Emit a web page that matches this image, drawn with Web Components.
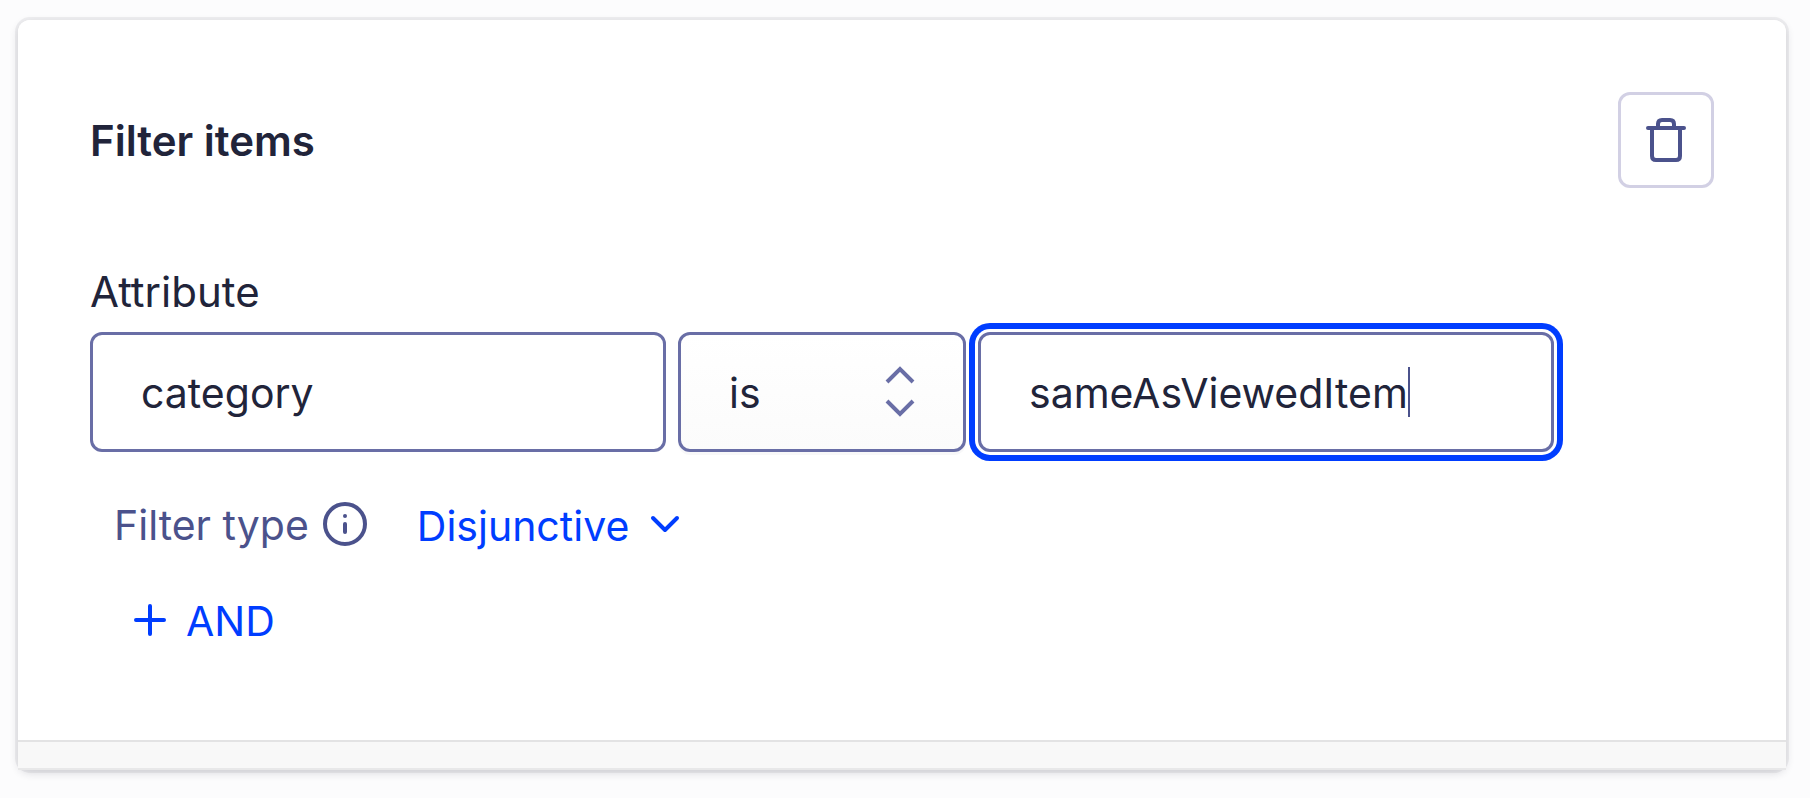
<!DOCTYPE html>
<html lang="en">
<head>
<meta charset="utf-8">
<title>Filter items</title>
<style>
  body {
    margin: 0;
    padding: 20px 24px 28px 18px;
    background: #fcfcfd;
    color: #21243a;
    font: 42px/60px Inter, "Liberation Sans", sans-serif;
    --accent: #003dff;
    --muted: #4b528c;
    --line: #696ea6;
    --control-size: 41px;
  }
</style>
</head>
<body>
<filter-card>
  <filter-header>Filter items</filter-header>
  <filter-row>
    <text-field label="Attribute" value="category"></text-field>
    <operator-select></operator-select>
    <text-field name="Value" value="sameAsViewedItem" active></text-field>
  </filter-row>
  <filter-type>Filter type</filter-type>
  <add-button>AND</add-button>
</filter-card>

<script>
  const base = `
    <style>
      * { box-sizing: border-box; }
      button, input, select { font: inherit; color: inherit; margin: 0; padding: 0; border: 0; background: none; outline: 0; appearance: none; }
      button, select { cursor: pointer; }
      svg { display: block; fill: none; stroke: currentColor; flex: none; }
    </style>`;

  const define = (name, html, setup) => customElements.define(name, class extends HTMLElement {
    constructor() {
      super();
      this.attachShadow({ mode: 'open' }).innerHTML = base + html;
    }
    connectedCallback() { if (setup) setup(this, this.shadowRoot); }
  });

  define('filter-card', `
    <style>
      :host { display: block; }
      section { border-radius: 12px; box-shadow: 0 0 0 3px rgba(35,38,59,.06), 0 3px 9px 0 rgba(35,38,59,.16); }
      .body { padding: 72px 72px 90px; background: #fff; border-radius: 12px 12px 0 0; }
      footer { height: 30px; background: #f8f8f8; border-top: 2px solid #e3e3e4; border-bottom: 2px solid #e8e8e9; }
    </style>
    <section><div class="body"><slot></slot></div><footer></footer></section>`);

  define('filter-header', `
    <style>
      :host { display: flex; justify-content: space-between; align-items: center; }
      h2 { margin: 0; padding-top: 2px; font-size: inherit; font-weight: 600; }
      button { display: grid; place-items: center; width: 96px; height: 96px; border: 3px solid #d2d0e4; border-radius: 12px; background: #fff; color: var(--muted); }
    </style>
    <h2><slot></slot></h2>
    <button type="button" aria-label="Delete filter">
      <svg width="48" height="48" viewBox="0 0 48 48" stroke-width="4" stroke-linecap="round" stroke-linejoin="round"><path d="M6 12H42M10 12V40Q10 44 14 44H34Q38 44 38 40V12M16 12V8Q16 4 20 4H28Q32 4 32 8V12"/></svg>
    </button>`);

  define('filter-row', `
    <style>:host { display: grid; grid-template-columns: 2fr 1fr 2fr; gap: 12px; align-items: end; margin: 74px 160px 0 0; }</style>
    <slot></slot>`);

  define('text-field', `
    <style>
      :host { display: block; min-width: 0; }
      label { display: block; margin-bottom: 10px; }
      label:empty { display: none; }
      .box { display: flex; align-items: center; height: 120px; padding: 0 48px; border: 3px solid var(--line); border-radius: 12px; background: #fff; font-size: var(--control-size); }
      input { flex: 1; min-width: 0; height: 60px; padding-top: 2px; }
      .caret { display: none; width: 2px; height: 50px; background: var(--muted); }
      :host([active]) .box { box-shadow: 0 0 0 3px #fff, 0 0 0 9px var(--accent); }
      :host([active]) input { flex: none; field-sizing: content; caret-color: transparent; }
      :host([active]) .caret { display: block; }
    </style>
    <label for="field"></label>
    <div class="box"><input id="field" type="text"><span class="caret"></span></div>`,
    (host, root) => {
      const input = root.querySelector('input');
      root.querySelector('label').textContent = host.getAttribute('label') || '';
      if (host.hasAttribute('name')) input.setAttribute('aria-label', host.getAttribute('name'));
      input.value = host.getAttribute('value');
    });

  define('operator-select', `
    <style>
      :host { display: grid; align-items: center; font-size: var(--control-size); }
      select, svg { grid-area: 1 / 1; }
      select { width: 100%; height: 120px; padding: 2px 48px 0; border: 3px solid var(--line); border-radius: 12px; background: linear-gradient(#fff, #fbfbfb); box-shadow: 0 3px 0 rgba(35,38,59,.03); }
      svg { justify-self: end; margin-right: 48px; color: var(--line); pointer-events: none; }
    </style>
    <select aria-label="Operator"><option>is</option><option>is not</option></select>
    <svg width="36" height="60" viewBox="0 0 36 60" stroke-width="4"><path d="M5 20L18 7L31 20M5 39L18 52L31 39"/></svg>`);

  define('filter-type', `
    <style>
      :host { display: flex; align-items: center; margin-top: 42px; padding-left: 24px; color: var(--muted); font-size: var(--control-size); }
      label { height: 60px; padding-top: 1px; }
      .info { margin-left: 12px; }
      .pick { display: grid; align-items: center; margin-left: 48px; color: var(--accent); }
      select, .pick svg { grid-area: 1 / 1; }
      select { field-sizing: content; height: 60px; padding: 2px 60px 0 0; }
      .pick svg { justify-self: end; pointer-events: none; }
    </style>
    <label for="type"><slot></slot></label>
    <button class="info" type="button" aria-label="About filter types">
      <svg width="48" height="48" viewBox="0 0 48 48" stroke-width="4" stroke-linecap="round"><circle cx="24" cy="24" r="20"/><path d="M24 24V32"/><circle cx="24" cy="16" r="2" fill="currentColor" stroke="none"/></svg>
    </button>
    <div class="pick">
      <select id="type"><option>Disjunctive</option><option>Conjunctive</option></select>
      <svg width="48" height="48" viewBox="0 0 48 48" stroke-width="4" stroke-linecap="round" stroke-linejoin="round"><path d="M12 18L24 30L36 18"/></svg>
    </div>`);

  define('add-button', `
    <style>
      :host { display: flex; margin-top: 36px; padding-left: 36px; color: var(--accent); font-size: var(--control-size); }
      button { display: flex; align-items: center; gap: 12px; height: 60px; }
      span { height: 60px; padding-top: 1px; }
    </style>
    <button type="button">
      <svg width="48" height="48" viewBox="0 0 48 48" stroke-width="4" stroke-linecap="round"><path d="M10 24H38M24 10V38"/></svg>
      <span><slot></slot></span>
    </button>`);
</script>
</body>
</html>
